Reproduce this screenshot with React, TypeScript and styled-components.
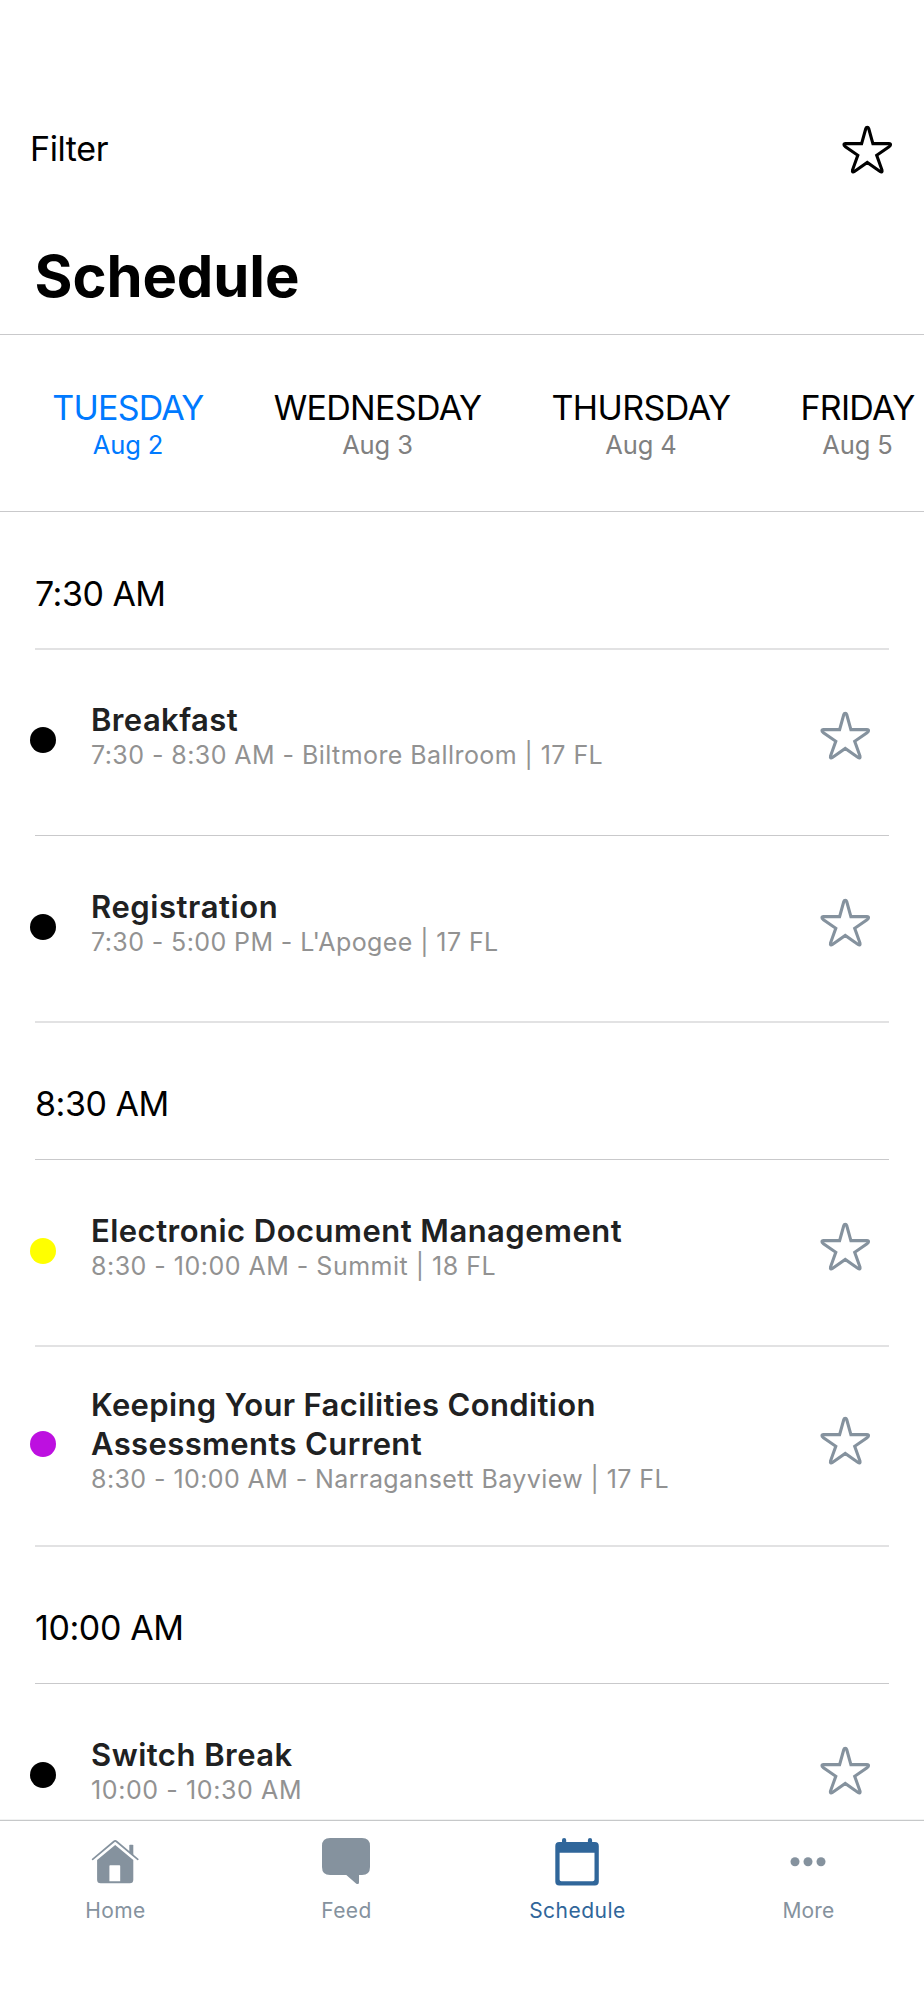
import React from 'react';
import styled, { createGlobalStyle } from 'styled-components';

const GlobalStyle = createGlobalStyle`
  *, *::before, *::after { box-sizing: border-box; }
  body {
    margin: 0;
    background: #fff;
    font-family: Inter, "Liberation Sans", sans-serif;
    color: #000;
  }
  button {
    border: 0;
    padding: 0;
    margin: 0;
    background: none;
    font: inherit;
    color: inherit;
    display: block;
  }
`;

const slate = '#85929e';
const hairline = '#c9c9cb';

const Screen = styled.div`
  width: 924px;
  height: 2000px;
  display: flex;
  flex-direction: column;
  overflow: hidden;
  background: #fff;
`;

const Header = styled.header`
  height: 335px;
  flex: none;
  padding-top: 118px;
  border-bottom: 1px solid ${hairline};
`;

const Toolbar = styled.div`
  height: 61px;
  display: flex;
  align-items: center;
  justify-content: space-between;
  padding: 0 31px 0 30px;
`;

const FilterButton = styled.button`
  font-size: 34px;
  line-height: 41px;
  letter-spacing: -0.4px;
`;

const PageTitle = styled.h1`
  margin: 62px 0 0;
  padding-left: 34.5px;
  font-size: 58px;
  line-height: 70px;
  font-weight: 700;
  letter-spacing: -0.1px;
`;

const DayStrip = styled.nav`
  height: 177px;
  flex: none;
  display: flex;
  padding: 52px 0 0 17.5px;
  border-bottom: 1px solid ${hairline};
  overflow: hidden;
`;

const DayTab = styled.button<{ $width: number; $active?: boolean }>`
  width: ${(p) => p.$width}px;
  flex: none;
  display: flex;
  flex-direction: column;
  align-items: center;
  justify-content: flex-start;
  gap: 1px;
  white-space: nowrap;
  color: ${(p) => (p.$active ? '#007aff' : '#000')};
`;

const DayName = styled.span<{ $track: number }>`
  font-size: 34px;
  line-height: 41px;
  letter-spacing: ${(p) => p.$track}px;
`;

const DayDate = styled.span<{ $active?: boolean }>`
  font-size: 25.5px;
  line-height: 31px;
  letter-spacing: -0.1px;
  color: ${(p) => (p.$active ? '#007aff' : '#808080')};
`;

const Agenda = styled.main`
  flex: 1;
  min-height: 0;
  overflow: hidden;
`;

const Divider = styled.hr<{ $soft?: boolean }>`
  border: 0;
  margin: 0 35px;
  height: ${(p) => (p.$soft ? 2 : 1)}px;
  background: ${(p) => (p.$soft ? '#e2e2e3' : hairline)};
`;

const TimeHeading = styled.h2<{ $top: number; $track: number }>`
  margin: 0;
  height: 136px;
  padding: ${(p) => p.$top}px 35px 0;
  font-size: 34px;
  line-height: 41px;
  font-weight: 400;
  letter-spacing: ${(p) => p.$track}px;
`;

const SessionRow = styled.article<{ $height: number; $bottom: number }>`
  height: ${(p) => p.$height}px;
  display: flex;
  align-items: center;
  padding: 0 53px ${(p) => p.$bottom}px 30px;
`;

const CategoryDot = styled.span<{ $color: string }>`
  width: 26px;
  height: 26px;
  flex: none;
  margin: 9px 35px 0 0;
  border-radius: 50%;
  background: ${(p) => p.$color};
`;

const SessionText = styled.div`
  flex: 1;
  display: flex;
  flex-direction: column;
  gap: 1px;
`;

const SessionTitle = styled.h3`
  margin: 0;
  font-size: 31px;
  line-height: 39px;
  font-weight: 600;
  color: #202122;
`;

const TitleLine = styled.span<{ $track: number }>`
  display: block;
  letter-spacing: ${(p) => p.$track}px;
`;

const SessionMeta = styled.p<{ $track: number }>`
  margin: 0;
  font-size: 25px;
  line-height: 30px;
  color: #929292;
  letter-spacing: ${(p) => p.$track}px;
`;

const FavoriteButton = styled.button`
  flex: none;
  margin-bottom: 1px;
`;

const TabBar = styled.nav`
  height: 180px;
  flex: none;
  display: flex;
  align-items: flex-start;
  padding-top: 15px;
  border-top: 1px solid #c6c8c9;
  box-shadow: 0 -1px 0 #f1f2f2;
`;

const TabItem = styled.button<{ $active?: boolean }>`
  flex: 1;
  display: flex;
  flex-direction: column;
  align-items: center;
  gap: 12px;
  color: ${(p) => (p.$active ? '#30669a' : slate)};
`;

const TabLabel = styled.span<{ $track: number }>`
  font-size: 21px;
  line-height: 25px;
  letter-spacing: ${(p) => p.$track}px;
`;

const Icon = styled.svg`
  display: block;
  flex: none;
`;

const StarIcon = ({ color }: { color: string }) => (
  <Icon width="51" height="51" viewBox="0 0 51 51" fill="none" stroke={color} strokeWidth="3.1">
    <path d="M23.8 5.5Q24.2 4.4 25.25 4.4Q26.3 4.4 26.7 5.5L30.9 20.6H47Q48.5 20.6 48.5 21.7Q48.5 22.5 47.4 23.4L34.7 32.3L40 47.1Q40.3 48.5 39.8 48.8Q39.1 49.1 38.1 48.5L25.25 39.5L12.4 48.5Q11.4 49.1 10.7 48.8Q10.2 48.5 10.5 47.1L15.8 32.3L3.1 23.4Q2 22.5 2 21.7Q2 20.6 3.5 20.6H19.6Z" />
  </Icon>
);

const HomeIcon = () => (
  <Icon width="61" height="50" viewBox="0 0 61 50" fill="currentColor">
    <path d="M44.3 9.5q0-.8.8-.8h2.4q.8 0 .8.8v10.8l-4-3.4z" />
    <path
      d="M7.6 23.3L28.9 5.5Q30.2 4.4 31.5 5.5L52.8 23.3"
      fill="none"
      stroke="currentColor"
      strokeWidth="1.7"
      strokeLinecap="round"
    />
    <path
      fillRule="evenodd"
      d="M12.1 24L30.2 9L48.3 24V43.8Q48.3 47.3 44.8 47.3H15.6Q12.1 47.3 12.1 43.8ZM25.1 29.2Q24.4 29.2 24.4 29.9V45.2H35.2V29.9Q35.2 29.2 34.5 29.2Z"
    />
  </Icon>
);

const FeedIcon = () => (
  <Icon width="61" height="50" viewBox="0 0 61 50" fill="currentColor">
    <path d="M14 2.1H46Q54 2.1 54 10.1V31Q54 39 46 39H43V46.5Q43 48.8 40.3 47.8L30.3 39H14Q6 39 6 31V10.1Q6 2.1 14 2.1Z" />
  </Icon>
);

const CalendarIcon = () => (
  <Icon width="61" height="50" viewBox="0 0 61 50" fill="currentColor">
    <rect x="15" y="2" width="4.2" height="8" rx="2.1" />
    <rect x="40.9" y="2" width="4.2" height="8" rx="2.1" />
    <path
      fillRule="evenodd"
      d="M12.2 6.1H47.9Q51.8 6.1 51.8 10V45.6Q51.8 49.5 47.9 49.5H12.2Q8.3 49.5 8.3 45.6V10Q8.3 6.1 12.2 6.1ZM12.6 16.8V43.4Q12.6 45.2 14.4 45.2H45.7Q47.5 45.2 47.5 43.4V16.8Z"
    />
  </Icon>
);

const MoreIcon = () => (
  <Icon width="61" height="50" viewBox="0 0 61 50" fill="currentColor">
    <circle cx="17" cy="25.7" r="4.5" />
    <circle cx="30" cy="25.7" r="4.5" />
    <circle cx="43" cy="25.7" r="4.5" />
  </Icon>
);

const days = [
  { name: 'TUESDAY', date: 'Aug 2', width: 221, track: -0.8, active: true },
  { name: 'WEDNESDAY', date: 'Aug 3', width: 278, track: -0.68 },
  { name: 'THURSDAY', date: 'Aug 4', width: 249, track: -0.55 },
  { name: 'FRIDAY', date: 'Aug 5', width: 184, track: -0.72 },
];

type Line = [text: string, track: number];

interface Session {
  title: Line[];
  meta: Line;
  color: string;
  height: number;
  bottom: number;
  soft?: boolean;
}

interface Slot {
  time: Line;
  top: number;
  soft?: boolean;
  sessions: Session[];
}

const slots: Slot[] = [
  {
    time: ['7:30 AM', -0.5],
    top: 61,
    soft: true,
    sessions: [
      {
        title: [['Breakfast', 0.4]],
        meta: ['7:30 - 8:30 AM - Biltmore Ballroom | 17 FL', 0.43],
        color: '#000',
        height: 185,
        bottom: 15,
      },
      {
        title: [['Registration', 0.58]],
        meta: ["7:30 - 5:00 PM - L'Apogee | 17 FL", 0.4],
        color: '#000',
        height: 185,
        bottom: 13,
        soft: true,
      },
    ],
  },
  {
    time: ['8:30 AM', -0.45],
    top: 60,
    sessions: [
      {
        title: [['Electronic Document Management', 0.47]],
        meta: ['8:30 - 10:00 AM - Summit | 18 FL', 0.49],
        color: '#ffff00',
        height: 185,
        bottom: 13,
        soft: true,
      },
      {
        title: [
          ['Keeping Your Facilities Condition', 0.36],
          ['Assessments Current', 0.38],
        ],
        meta: ['8:30 - 10:00 AM - Narragansett Bayview | 17 FL', 0.42],
        color: '#bd10e0',
        height: 198,
        bottom: 13,
        soft: true,
      },
    ],
  },
  {
    time: ['10:00 AM', -0.4],
    top: 60,
    sessions: [
      {
        title: [['Switch Break', 0.48]],
        meta: ['10:00 - 10:30 AM', 0.6],
        color: '#000',
        height: 185,
        bottom: 13,
      },
    ],
  },
];

const tabs = [
  { label: 'Home', icon: <HomeIcon />, track: 0.4 },
  { label: 'Feed', icon: <FeedIcon />, track: 0.45 },
  { label: 'Schedule', icon: <CalendarIcon />, track: 0.5, active: true },
  { label: 'More', icon: <MoreIcon />, track: 0.2 },
];

export default function App() {
  return (
    <>
      <GlobalStyle />
      <Screen>
        <Header>
          <Toolbar>
            <FilterButton>Filter</FilterButton>
            <button aria-label="Favorites">
              <StarIcon color="#000" />
            </button>
          </Toolbar>
          <PageTitle>Schedule</PageTitle>
        </Header>

        <DayStrip>
          {days.map((day) => (
            <DayTab key={day.name} $width={day.width} $active={day.active}>
              <DayName $track={day.track}>{day.name}</DayName>
              <DayDate $active={day.active}>{day.date}</DayDate>
            </DayTab>
          ))}
        </DayStrip>

        <Agenda>
          {slots.map((slot) => (
            <section key={slot.time[0]}>
              <TimeHeading $top={slot.top} $track={slot.time[1]}>
                {slot.time[0]}
              </TimeHeading>
              <Divider $soft={slot.soft} />
              {slot.sessions.map((session) => (
                <React.Fragment key={session.title[0][0]}>
                  <SessionRow $height={session.height} $bottom={session.bottom}>
                    <CategoryDot $color={session.color} />
                    <SessionText>
                      <SessionTitle>
                        {session.title.map(([text, track]) => (
                          <TitleLine key={text} $track={track}>
                            {text}
                          </TitleLine>
                        ))}
                      </SessionTitle>
                      <SessionMeta $track={session.meta[1]}>{session.meta[0]}</SessionMeta>
                    </SessionText>
                    <FavoriteButton aria-label="Add to favorites">
                      <StarIcon color={slate} />
                    </FavoriteButton>
                  </SessionRow>
                  <Divider $soft={session.soft} />
                </React.Fragment>
              ))}
            </section>
          ))}
        </Agenda>

        <TabBar>
          {tabs.map((tab) => (
            <TabItem key={tab.label} $active={tab.active}>
              {tab.icon}
              <TabLabel $track={tab.track}>{tab.label}</TabLabel>
            </TabItem>
          ))}
        </TabBar>
      </Screen>
    </>
  );
}
